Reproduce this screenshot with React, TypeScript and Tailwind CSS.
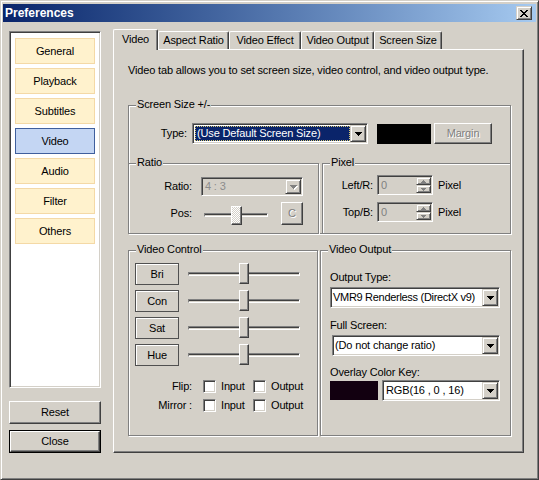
import React from "react";

const raised =
  "border border-t-white border-l-white border-r-[#404040] border-b-[#404040] shadow-[inset_-1px_-1px_0_#808080]";
const raised2 =
  "border border-t-[#d4d0c8] border-l-[#d4d0c8] border-r-[#404040] border-b-[#404040] shadow-[inset_1px_1px_0_#fff,inset_-1px_-1px_0_#808080]";
const sunken =
  "border border-t-[#808080] border-l-[#808080] border-r-white border-b-white shadow-[inset_1px_1px_0_#404040,inset_-1px_-1px_0_#d4d0c8]";
const etched =
  "border border-[#808080] shadow-[inset_1px_1px_0_#fff,1px_1px_0_#fff]";

function Down({ disabled }: { disabled?: boolean }) {
  return (
    <svg width="7" height="4" viewBox="0 0 7 4" shapeRendering="crispEdges" className={disabled ? "drop-shadow-[1px_1px_0_#fff]" : ""}>
      <path d="M0 0H7V1H6V2H5V3H4V4H3V3H2V2H1V1H0Z" fill={disabled ? "#808080" : "#000"} />
    </svg>
  );
}

function DropBtn({ disabled }: { disabled?: boolean }) {
  return (
    <div className={`w-[16px] h-full flex items-center justify-center bg-[#d4d0c8] ${raised2}`}>
      <Down disabled={disabled} />
    </div>
  );
}

function Combo({
  className,
  children,
  disabled,
}: {
  className: string;
  children: React.ReactNode;
  disabled?: boolean;
}) {
  return (
    <div className={`flex p-[1px] ${sunken} ${disabled ? "bg-[#d4d0c8]" : "bg-white"} ${className}`}>
      <div className="flex-1 flex items-center min-w-0 whitespace-nowrap overflow-hidden">{children}</div>
      <DropBtn disabled={disabled} />
    </div>
  );
}

function Group({
  label,
  className,
  children,
}: {
  label: string;
  className: string;
  children?: React.ReactNode;
}) {
  return (
    <div className={`relative ${etched} ${className}`}>
      <span className="absolute left-[7px] top-[-8px] bg-[#d4d0c8] px-[1px] leading-[13px]">{label}</span>
      {children}
    </div>
  );
}

function Check() {
  return <div className={`w-[13px] h-[13px] bg-white ${sunken}`} />;
}

function Slider() {
  return (
    <div className="relative ml-[9px] w-[112px] h-[22px]">
      <div className="absolute left-0 right-0 top-[9px] h-[4px] border border-t-[#808080] border-l-[#808080] border-r-white border-b-white shadow-[inset_0_1px_0_#404040]" />
      <div className={`absolute left-[51px] top-0 w-[10px] h-[21px] bg-[#d4d0c8] ${raised}`} />
    </div>
  );
}

function Spin() {
  const arrow = (
    <svg width="5" height="3" viewBox="0 0 5 3" shapeRendering="crispEdges">
      <path d="M2 0H3V1H4V2H5V3H0V2H1V1H2Z" fill="#808080" />
    </svg>
  );
  return (
    <div className="flex flex-col w-[15px] h-full">
      <div className={`flex-1 flex items-center justify-center bg-[#d4d0c8] ${raised2}`}>{arrow}</div>
      <div className={`flex-1 flex items-center justify-center bg-[#d4d0c8] ${raised2}`}>
        <div className="rotate-180 flex">{arrow}</div>
      </div>
    </div>
  );
}

function PixelRow({ label, className }: { label: string; className?: string }) {
  return (
    <div className={`flex items-center ${className ?? ""}`}>
      <span className="w-[50px] text-right">{label}</span>
      <div className={`ml-[4px] w-[56px] h-[20px] flex p-[1px] bg-[#d4d0c8] ${sunken}`}>
        <span className="flex-1 pl-[2px] text-[#808080] leading-[16px]">0</span>
        <Spin />
      </div>
      <span className="ml-[5px]">Pixel</span>
    </div>
  );
}

const sideItems = ["General", "Playback", "Subtitles", "Video", "Audio", "Filter", "Others"];
const tabs: { t: string; w: string }[] = [
  { t: "Aspect Ratio", w: "w-[71px]" },
  { t: "Video Effect", w: "w-[72px]" },
  { t: "Video Output", w: "w-[73px]" },
  { t: "Screen Size", w: "w-[68px]" },
];

export default function App() {
  return (
    <div className="w-[539px] h-[480px] overflow-hidden bg-[#d4d0c8] text-[11px] leading-[13px] tracking-[-0.15px] text-black font-['Liberation_Sans',Arial,sans-serif] border border-t-[#d4d0c8] border-l-[#d4d0c8] border-r-[#404040] border-b-[#404040] shadow-[inset_1px_1px_0_#fff,inset_-1px_-1px_0_#808080]">
      {/* Title bar */}
      <div className="h-[18px] mx-[2px] mt-[3px] bg-linear-to-r from-[#0a246a] to-[#a6caf0] flex items-center justify-between pl-[2px] pr-[4px]">
        <span className="text-white font-bold text-[12px] leading-[14px] tracking-normal">Preferences</span>
        <div className={`w-[16px] h-[14px] bg-[#d4d0c8] flex items-center justify-center ${raised2}`}>
          <svg width="8" height="7" viewBox="0 0 8 7" shapeRendering="crispEdges">
            <path
              d="M0 0h2v1H0zM6 0h2v1H6zM1 1h2v1H1zM5 1h2v1H5zM2 2h4v1H2zM3 3h2v1H3zM2 4h4v1H2zM1 5h2v1H1zM5 5h2v1H5zM0 6h2v1H0zM6 6h2v1H6z"
              fill="#000"
            />
          </svg>
        </div>
      </div>

      {/* Body */}
      <div className="flex pl-[8px]">
        {/* Left column */}
        <div className="w-[92px] mt-[9px] flex flex-col">
          <div className={`h-[357px] bg-white pt-[6px] flex flex-col gap-[4px] ${sunken}`}>
            {sideItems.map((s) => (
              <div
                key={s}
                className={`mx-auto w-[80px] h-[26px] flex items-center justify-center border ${
                  s === "Video" ? "border-[#3f5f9d] bg-[#c4d6f3]" : "border-[#f4d9a6] bg-[#fff2cd]"
                }`}
              >
                {s}
              </div>
            ))}
          </div>
          <div className={`mt-[13px] h-[23px] flex items-center justify-center bg-[#d4d0c8] ${raised}`}>Reset</div>
          <div className="mt-[6px] h-[23px] border border-black">
            <div className={`h-full flex items-center justify-center bg-[#d4d0c8] ${raised}`}>Close</div>
          </div>
        </div>

        {/* Tab column */}
        <div className="ml-[12px] mt-[7px] w-[411px] flex flex-col">
          <div className="flex items-end h-[20px]">
            <div className="relative z-10 w-[45px] h-[21px] -mb-px bg-[#d4d0c8] border-l border-t border-r border-l-white border-t-white border-r-[#404040] rounded-t-[2px] shadow-[inset_-1px_0_0_#808080] flex justify-center pt-[3px]">
              Video
            </div>
            {tabs.map((tb) => (
              <div
                key={tb.t}
                className={`${tb.w} h-[18px] bg-[#d4d0c8] border-l border-t border-r border-l-white border-t-white border-r-[#404040] rounded-t-[2px] shadow-[inset_-1px_0_0_#808080] flex justify-center pt-[2px]`}
              >
                {tb.t}
              </div>
            ))}
          </div>

          <div className="h-[404px] border border-t-white border-l-white border-r-[#404040] border-b-[#404040] shadow-[inset_-1px_-1px_0_#808080] pl-[14px] pt-[14px]">
            <div>Video tab allows you to set screen size, video control, and video output type.</div>

            {/* Screen Size */}
            <Group label="Screen Size +/-" className="mt-[28px] w-[383px] h-[129px] flex flex-col">
              <div className="flex items-center mt-[17px] h-[21px]">
                <span className="w-[58px] text-right">Type:</span>
                <Combo className="ml-[5px] w-[176px] h-[21px]">
                  <span className="ml-[1px] h-[15px] flex-1 flex items-center bg-[#0a246a] text-white pl-[2px] outline outline-1 outline-dotted outline-[#d8c870] -outline-offset-1">
                    (Use Default Screen Size)
                  </span>
                </Combo>
                <div className="ml-[9px] w-[54px] h-[20px] bg-black" />
                <div className={`ml-[3px] w-[58px] h-[21px] flex items-center justify-center bg-[#d4d0c8] text-[#808080] [text-shadow:1px_1px_0_#fff] ${raised}`}>
                  Margin
                </div>
              </div>

              <div className="flex gap-[3px] -mx-px -mb-px mt-[19px] flex-1">
                <Group label="Ratio" className="w-[191px] pt-[13px]">
                  <div className="flex items-center">
                    <span className="w-[63px] text-right">Ratio:</span>
                    <Combo disabled className="ml-[9px] w-[102px] h-[19px]">
                      <span className="pl-[2px] text-[#8c8c8c]">4 : 3</span>
                    </Combo>
                  </div>
                  <div className="flex items-center mt-[6px] h-[23px]">
                    <span className="w-[63px] text-right">Pos:</span>
                    <div className="relative ml-[12px] w-[64px] h-[23px]">
                      <div className="absolute left-0 right-0 top-[11px] h-[4px] border border-t-[#808080] border-l-[#808080] border-r-white border-b-white shadow-[inset_0_1px_0_#404040]" />
                      <div className="absolute left-[27px] top-[4px] w-[11px] h-[19px] border border-t-white border-l-white border-r-[#404040] border-b-[#404040] shadow-[inset_-1px_-1px_0_#808080] bg-[repeating-conic-gradient(#ffffff_0_25%,#d4d0c8_0_50%)] bg-[length:2px_2px]" />
                    </div>
                    <div className={`ml-[13px] w-[22px] h-[23px] flex items-center justify-center bg-[#d4d0c8] text-[#808080] [text-shadow:1px_1px_0_#fff] ${raised}`}>
                      C
                    </div>
                  </div>
                </Group>
                <Group label="Pixel" className="w-[189px] pt-[11px]">
                  <PixelRow label="Left/R:" />
                  <PixelRow label="Top/B:" className="mt-[7px]" />
                </Group>
              </div>
            </Group>

            <div className="flex gap-[2px] mt-[16px]">
              {/* Video Control */}
              <Group label="Video Control" className="w-[190px] h-[186px] pt-[12px]">
                <div className="pl-[6px] flex flex-col gap-[5px]">
                  {["Bri", "Con", "Sat", "Hue"].map((b) => (
                    <div key={b} className="flex items-center h-[22px]">
                      <div className="w-[44px] h-[22px] border border-[#505050] bg-[#d4d0c8] shadow-[inset_1px_1px_0_#fff] flex items-center justify-center">
                        {b}
                      </div>
                      <Slider />
                    </div>
                  ))}
                </div>
                <div className="flex items-center mt-[14px] h-[13px]">
                  <span className="w-[63px] text-right">Flip:</span>
                  <div className="ml-[11px]"><Check /></div>
                  <span className="ml-[5px] w-[32px]">Input</span>
                  <Check />
                  <span className="ml-[5px]">Output</span>
                </div>
                <div className="flex items-center mt-[6px] h-[13px]">
                  <span className="w-[63px] text-right">Mirror :</span>
                  <div className="ml-[11px]"><Check /></div>
                  <span className="ml-[5px] w-[32px]">Input</span>
                  <Check />
                  <span className="ml-[5px]">Output</span>
                </div>
              </Group>

              {/* Video Output */}
              <Group label="Video Output" className="w-[191px] h-[186px] pl-[9px] pt-[20px]">
                <div>Output Type:</div>
                <Combo className="mt-[3px] w-[170px] h-[21px]">
                  <span className="pl-[1px] tracking-[-0.3px]">VMR9 Renderless (DirectX v9)</span>
                </Combo>
                <div className="mt-[11px]">Full Screen:</div>
                <Combo className="mt-[3px] ml-[2px] w-[168px] h-[21px]">
                  <span className="pl-[1px]">(Do not change ratio)</span>
                </Combo>
                <div className="mt-[10px]">Overlay Color Key:</div>
                <div className="flex items-center mt-[1px]">
                  <div className="w-[48px] h-[19px] bg-[#120010]" />
                  <Combo className="ml-[4px] w-[118px] h-[21px]">
                    <span className="pl-[2px]">RGB(16 , 0 , 16)</span>
                  </Combo>
                </div>
              </Group>
            </div>
          </div>
        </div>
      </div>
    </div>
  );
}
